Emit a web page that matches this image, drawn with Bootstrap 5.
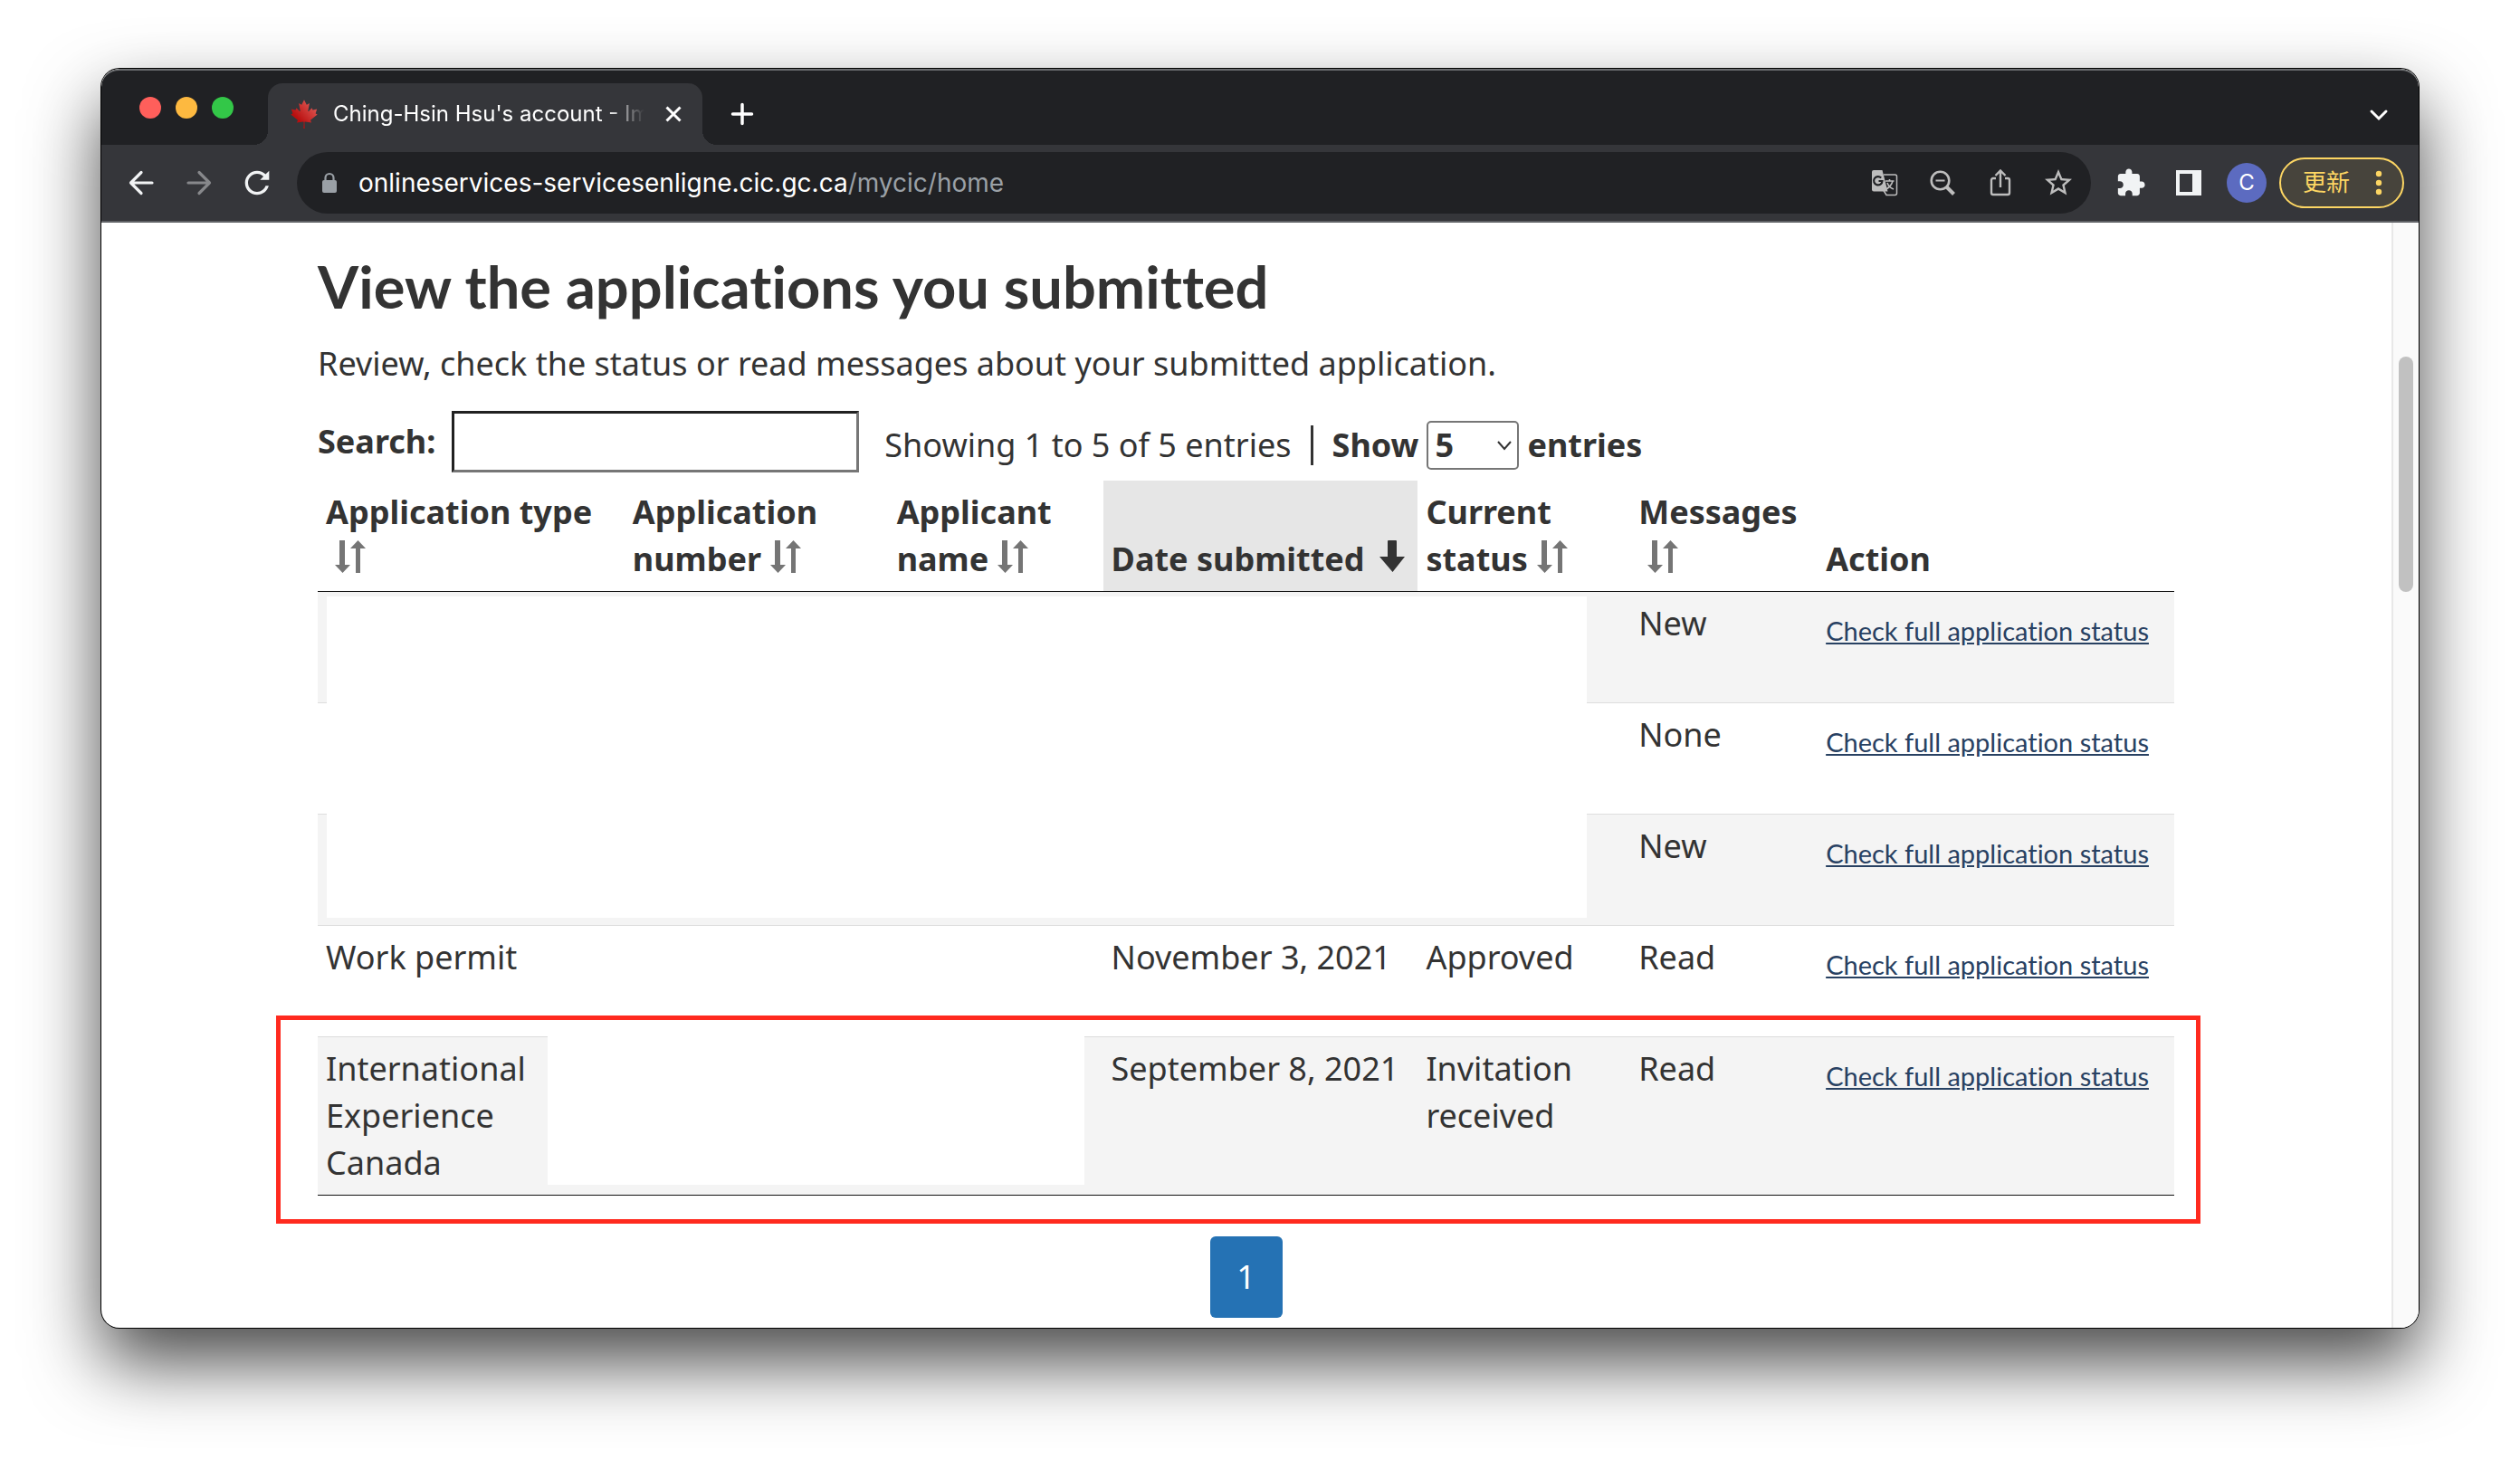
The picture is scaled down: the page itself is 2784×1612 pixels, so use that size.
<!DOCTYPE html>
<html lang="en">
<head>
<meta charset="utf-8">
<meta name="viewport" content="width=device-width, initial-scale=1">
<title>Ching-Hsin Hsu's account</title>
<link rel="stylesheet" href="https://cdn.jsdelivr.net/npm/bootstrap@5.3.0/dist/css/bootstrap.min.css">
<style>
  body { background: #fff; color: #333; font: 36px/52px "Noto Sans", sans-serif; }
  .desk { padding: 76px 112px 148px; }
  .browser-window { border-radius: 20px; background: #fff; box-shadow: 0 0 0 1px #000, 0 38px 80px rgba(0,0,0,.72); overflow: hidden; }
  .chrome-ui { font-family: Inter, "Noto Sans CJK TC", sans-serif; color: #fff; }
  .chrome-ui button { background: none; border: 0; padding: 0; color: inherit; display: flex; align-items: center; justify-content: center; }
  svg { display: block; flex: none; }

  /* tab strip */
  .tab-strip { height: 84px; background: #202124; border-top: 2px solid #6a6c6f; padding: 0 24px 0 42px; border-radius: 20px 20px 0 0; }
  .lights { gap: 16px; height: 82px; }
  .light { width: 24px; height: 24px; border-radius: 50%; }
  .chrome-tab { position: relative; width: 480px; height: 68px; margin-left: 38px; padding: 0 16px 0 24px; background: #35363a; border-radius: 16px 16px 0 0; }
  .chrome-tab::before, .chrome-tab::after { content: ""; position: absolute; bottom: 0; width: 16px; height: 16px; }
  .chrome-tab::before { right: 100%; background: radial-gradient(circle at 0 0, transparent 16px, #35363a 16px); }
  .chrome-tab::after { left: 100%; background: radial-gradient(circle at 100% 0, transparent 16px, #35363a 16px); }
  .strip-btn { height: 68px; }
  .tab-title { font-size: 24px; line-height: 32px; margin-left: 16px; overflow: hidden; white-space: nowrap; -webkit-mask-image: linear-gradient(90deg, #000 88%, transparent); mask-image: linear-gradient(90deg, #000 88%, transparent); }

  /* address bar row */
  .tool-row { background: #35363a; height: 86px; border-bottom: 2px solid #5f6165; padding: 0 16px 0 24px; }
  .nav-btn { width: 40px; height: 40px; margin-right: 24px; }
  .omnibox { height: 68px; border-radius: 34px; background: #202124; padding: 0 18px 0 26px; }
  .url-text { font-size: 28px; line-height: 40px; color: #9aa0a6; margin-left: 22px; }
  .url-text span { color: #fff; }
  .omni-icons { gap: 28px; color: #bdc1c6; }
  .omni-icons button { width: 36px; height: 40px; }
  .side-icons { gap: 28px; color: #f1f3f4; margin-left: 26px; }
  .side-icons button { width: 36px; }
  .chrome-ui .avatar-dot { width: 44px; height: 44px; border-radius: 50%; background: #5c6bc0; font-size: 24px; margin-left: 24px; }
  .chrome-ui .update-pill { height: 56px; width: 138px; margin-left: 14px; border: 2px solid #fdd663; border-radius: 28px; background: #47443c; color: #fdd663; font-size: 26px; gap: 28px; padding-left: 2px; }

  /* page */
  .page-body { padding: 34px 240px 11px 239px; }
  .page-body h1 { font: 700 65px/72px Lato, sans-serif; font-variant-ligatures: none; margin: 0 0 24px; }
  .page-body p { margin: 0 0 26px; }
  .scroll-track { flex: 0 0 30px; background: #fafafa; border-left: 2px solid #e8e8e8; padding: 148px 6px 0; }
  .scroll-thumb { height: 260px; border-radius: 8px; background: #c1c1c1; }
  .search-box { width: 450px; height: 68px; border: 3px inset #767676; padding: 2px 8px; margin-left: 18px; background: #fff; }
  .list-info { margin-left: 28px; padding-top: 8px; }
  .split-bar { width: 3px; height: 44px; background: #333; margin: 0 21px; }
  .len-label { gap: 9px; }
  .len-wrap { position: relative; }
  .len-select { appearance: none; width: 102px; height: 54px; border: 2px solid #767676; border-radius: 5px; background: #fff; font-weight: 700; color: #333; padding: 0 7px; line-height: 48px; display: block; }
  .len-wrap svg { position: absolute; right: 8px; top: 22px; }

  .table-area { position: relative; margin-top: 9px; }
  .apps-table { width: 100%; table-layout: fixed; border-collapse: separate; border-spacing: 0; }
  .apps-table th { padding: 9px; vertical-align: bottom; border-bottom: 1px solid #111; text-align: left; }
  .apps-table th svg { display: inline-block; vertical-align: -2px; margin-left: 10px; }
  .apps-table th.sorted { background: #e6e6e6; white-space: nowrap; }
  .apps-table td { padding: 9px; height: 123px; vertical-align: top; border-top: 1px solid #ddd; }
  .apps-table tbody tr:nth-child(odd) td { background: #f4f4f4; }
  .apps-table tbody tr:first-child td { border-top: 0; height: 122px; }
  .apps-table tbody tr:last-child td { border-bottom: 1px solid #111; }
  .c1 { width: 16.52%; } .c2 { width: 14.23%; } .c3 { width: 11.55%; } .c4 { width: 16.96%; }
  .c5 { width: 11.45%; } .c6 { width: 10.09%; } .c7 { width: 19.2%; }
  .status-link { display: block; padding-top: 8px; font-family: Lato, sans-serif; font-size: 29px; font-variant-ligatures: none; color: #284162; white-space: nowrap; }
  .status-link:hover { color: #0535d2; }
  /* blanked-out personal details and the marker frame lie over the table */
  .blank-out { position: absolute; background: #fff; }
  .blank-a { left: 10px; top: 128px; width: 1392px; height: 355px; }
  .blank-b { left: 254px; bottom: 12px; width: 593px; height: 164px; }
  .marker { position: absolute; left: -46px; right: -29px; bottom: -31px; height: 230px; border: 5px solid #ff2a1f; }
  .pager-row { padding-top: 45px; }
  .pager-btn { width: 80px; height: 90px; border-radius: 6px; background: #2572b4; color: #fff; text-decoration: none; }
</style>
<script src="https://cdn.jsdelivr.net/npm/bootstrap@5.3.0/dist/js/bootstrap.bundle.min.js" defer></script>
</head>
<body>
<svg width="0" height="0" class="position-absolute" aria-hidden="true">
  <symbol id="sort-both" viewBox="0 0 34 36"><path d="M5 0h6v27h6L8.500 36 0 27h5zM23 36V9h-6L25.500 0 34 9h-6v27z"/></symbol>
</svg>
<div class="desk">
<div class="browser-window">
  <header class="chrome-ui">
    <div class="tab-strip d-flex align-items-end">
      <div class="lights d-flex align-items-center">
        <span class="light" style="background:#ff5f5b"></span><span class="light" style="background:#fdb940"></span><span class="light" style="background:#33c748"></span>
      </div>
      <div class="chrome-tab d-flex align-items-center">
        <svg width="32" height="32" viewBox="-2030 -2030 4060 4060"><defs><linearGradient id="leaf" x1="1" y1="0" x2="0" y2="1"><stop offset=".2" stop-color="#d9504c"/><stop offset=".7" stop-color="#b90f0f"/></linearGradient></defs><path fill="url(#leaf)" d="m-90 2030 45-863a95 95 0 0 0-111-98l-859 151 116-320a65 65 0 0 0-20-73l-941-762 212-99a65 65 0 0 0 34-79l-186-572 542 115a65 65 0 0 0 73-38l105-247 423 454a65 65 0 0 0 111-57l-204-1052 327 189a65 65 0 0 0 91-27l332-652 332 652a65 65 0 0 0 91 27l327-189-204 1052a65 65 0 0 0 111 57l423-454 105 247a65 65 0 0 0 73 38l542-115-186 572a65 65 0 0 0 34 79l212 99-941 762a65 65 0 0 0-20 73l116 320-859-151a95 95 0 0 0-111 98l45 863z"/></svg>
        <div class="tab-title flex-grow-1">Ching-Hsin Hsu's account - Im</div>
        <button type="button" aria-label="Close tab" class="ms-3"><svg width="32" height="32" viewBox="0 0 32 32" stroke="#fff" stroke-width="3"><path d="m8.500 8.500 15 15m0-15-15 15"/></svg></button>
      </div>
      <button type="button" aria-label="New tab" class="strip-btn ms-4 ps-1"><svg width="32" height="32" viewBox="0 0 32 32" stroke="#fff" stroke-width="3.500" stroke-linecap="round"><path d="M16 5.500v21M5.500 16h21"/></svg></button>
      <button type="button" aria-label="Search tabs" class="strip-btn ms-auto"><svg width="40" height="32" viewBox="0 0 40 32" fill="none" stroke="#fff" stroke-width="3" stroke-linecap="round"><path d="m12 13 8 8 8-8"/></svg></button>
    </div>
    <div class="tool-row d-flex align-items-center">
      <button type="button" aria-label="Back" class="nav-btn"><svg width="40" height="40" viewBox="0 0 40 40" fill="none" stroke="#f1f3f4" stroke-width="3.200" stroke-linecap="round" stroke-linejoin="round"><path d="M32 20H8.500M20 8.500 8.500 20 20 31.500"/></svg></button>
      <button type="button" aria-label="Forward" class="nav-btn"><svg width="40" height="40" viewBox="0 0 40 40" fill="none" stroke="#87888b" stroke-width="3.200" stroke-linecap="round" stroke-linejoin="round"><path d="M8 20h23.500M20 8.500 31.500 20 20 31.500"/></svg></button>
      <button type="button" aria-label="Reload" class="nav-btn"><svg width="40" height="40" viewBox="0 0 24 24" fill="#f1f3f4"><path d="M17.650 6.350C16.200 4.900 14.210 4 12 4c-4.420 0-7.990 3.580-7.990 8s3.570 8 7.990 8c3.730 0 6.840-2.550 7.730-6h-2.080c-.820 2.330-3.040 4-5.650 4-3.310 0-6-2.690-6-6s2.690-6 6-6c1.660 0 3.140.690 4.220 1.780L14 10h6V4l-2.350 2.350z"/></svg></button>
      <div class="omnibox d-flex align-items-center flex-grow-1">
        <svg width="20" height="24" viewBox="0 0 20 24"><rect x="2" y="9" width="16" height="14" rx="2" fill="#9aa0a6"/><path d="M5.500 10V6.500a4.500 4.500 0 0 1 9 0V10" fill="none" stroke="#9aa0a6" stroke-width="2.200"/></svg>
        <div class="url-text flex-grow-1"><span>onlineservices-servicesenligne.cic.gc.ca</span>/mycic/home</div>
        <div class="omni-icons d-flex align-items-center">
          <button type="button" aria-label="Translate"><svg width="30" height="30" viewBox="0 0 30 30"><path d="M14 6h12.500a2 2 0 0 1 2 2v18.500a2 2 0 0 1-2 2H17l-3-5" fill="none" stroke="#bdbdbd" stroke-width="1.500"/><path d="M3 1h9.500l6 23.500H3a2 2 0 0 1-2-2V3a2 2 0 0 1 2-2z" fill="#bdbdbd"/><path d="M11.200 9.500A4.700 4.700 0 1 0 12.500 13H8.500" fill="none" stroke="#202124" stroke-width="2.200"/><path d="M16 13h9.500M20.500 11v2M24 13c-1 4-4 7-7 9M18 15c1 3 4 6 7 7" fill="none" stroke="#bdbdbd" stroke-width="1.600"/></svg></button>
          <button type="button" aria-label="Zoom"><svg width="30" height="30" viewBox="0 0 30 30" fill="none" stroke="#bdbdbd" stroke-width="2.600"><circle cx="12.500" cy="12.500" r="9.800"/><path d="m19.500 19.500 8 8" stroke-width="4"/><path d="M7.500 12.500h10" stroke-width="1.800"/></svg></button>
          <button type="button" aria-label="Share"><svg width="30" height="32" viewBox="0 0 30 32" fill="none" stroke="#bdbdbd" stroke-width="2.400"><path d="M10 11H7a2 2 0 0 0-2 2v14a2 2 0 0 0 2 2h16a2 2 0 0 0 2-2V13a2 2 0 0 0-2-2h-3M15 21V3M9.500 8 15 2.500 20.500 8"/></svg></button>
          <button type="button" aria-label="Bookmark"><svg width="36" height="36" viewBox="0 0 24 24" fill="#bdbdbd"><path d="M22 9.240l-7.190-.620L12 2 9.190 8.630 2 9.240l5.460 4.730L5.820 21 12 17.270 18.180 21l-1.630-7.030L22 9.240zM12 15.400l-3.760 2.270 1-4.280-3.320-2.880 4.380-.380L12 6.100l1.710 4.040 4.380.380-3.320 2.880 1 4.280L12 15.400z"/></svg></button>
        </div>
      </div>
      <div class="side-icons d-flex align-items-center">
        <button type="button" aria-label="Extensions"><svg width="34" height="34" viewBox="0 0 24 24" fill="#f1f3f4"><path d="M20.500 11H19V7c0-1.100-.9-2-2-2h-4V3.500C13 2.120 11.880 1 10.500 1S8 2.120 8 3.500V5H4c-1.100 0-1.990.9-1.990 2v3.800H3.500c1.490 0 2.700 1.210 2.700 2.700s-1.210 2.700-2.700 2.700H2V20c0 1.100.9 2 2 2h3.800v-1.500c0-1.490 1.210-2.700 2.700-2.700 1.490 0 2.700 1.210 2.700 2.700V22H17c1.100 0 2-.9 2-2v-4h1.500c1.380 0 2.500-1.120 2.500-2.500S21.880 11 20.500 11z"/></svg></button>
        <button type="button" aria-label="Side panel"><svg width="28" height="28" viewBox="0 0 28 28"><path fill="#f1f3f4" fill-rule="evenodd" d="M0 0h28v28H0zM4 4v20h14V4z"/></svg></button>
      </div>
      <button type="button" class="avatar-dot">C</button>
      <button type="button" class="update-pill">更新<svg width="8" height="28" viewBox="0 0 8 28" fill="#fdd663"><circle cx="4" cy="4" r="3.200"/><circle cx="4" cy="14" r="3.200"/><circle cx="4" cy="24" r="3.200"/></svg></button>
    </div>
  </header>

  <div class="d-flex">
    <main class="page-body flex-grow-1">
      <h1>View the applications you submitted</h1>
      <p>Review, check the status or read messages about your submitted application.</p>
      <div class="d-flex align-items-center">
        <label for="search" class="fw-bold">Search:</label>
        <input id="search" type="search" class="search-box">
        <div class="list-info d-flex align-items-center">
          <span>Showing 1 to 5 of 5 entries</span>
          <span class="split-bar"></span>
          <div class="len-label d-flex align-items-center fw-bold">
            <label for="len">Show</label>
            <div class="len-wrap">
              <select id="len" class="len-select"><option>5</option></select>
              <svg width="16" height="11" viewBox="0 0 16 11" fill="none" stroke="#333" stroke-width="2"><path d="m1 1 7 8 7-8"/></svg>
            </div>
            <span>entries</span>
          </div>
        </div>
      </div>

      <div class="table-area">
        <table class="apps-table">
          <colgroup><col class="c1"><col class="c2"><col class="c3"><col class="c4"><col class="c5"><col class="c6"><col class="c7"></colgroup>
          <thead>
            <tr>
              <th scope="col">Application type<svg width="34" height="36" fill="#757575"><use href="#sort-both"/></svg></th>
              <th scope="col">Application number<svg width="34" height="36" fill="#757575"><use href="#sort-both"/></svg></th>
              <th scope="col">Applicant name<svg width="34" height="36" fill="#757575"><use href="#sort-both"/></svg></th>
              <th scope="col" class="sorted">Date submitted<svg width="40" height="36" viewBox="0 0 40 36" fill="#333"><path d="M17 0h7a1 1 0 0 1 1 1v17h9L20.500 35 6 18h9V1a1 1 0 0 1 1-1z"/></svg></th>
              <th scope="col">Current status<svg width="34" height="36" fill="#757575"><use href="#sort-both"/></svg></th>
              <th scope="col">Messages<svg width="34" height="36" fill="#757575"><use href="#sort-both"/></svg></th>
              <th scope="col">Action</th>
            </tr>
          </thead>
          <tbody>
            <tr><td></td><td></td><td></td><td></td><td></td><td>New</td><td><a href="#" class="status-link">Check full application status</a></td></tr>
            <tr><td></td><td></td><td></td><td></td><td></td><td>None</td><td><a href="#" class="status-link">Check full application status</a></td></tr>
            <tr><td></td><td></td><td></td><td></td><td></td><td>New</td><td><a href="#" class="status-link">Check full application status</a></td></tr>
            <tr><td>Work permit</td><td></td><td></td><td>November 3, 2021</td><td>Approved</td><td>Read</td><td><a href="#" class="status-link">Check full application status</a></td></tr>
            <tr><td>International<br>Experience<br>Canada</td><td></td><td></td><td>September 8, 2021</td><td>Invitation received</td><td>Read</td><td><a href="#" class="status-link">Check full application status</a></td></tr>
          </tbody>
        </table>
        <div class="blank-out blank-a"></div>
        <div class="blank-out blank-b"></div>
        <div class="marker"></div>
      </div>

      <nav class="pager-row d-flex justify-content-center" aria-label="Pages">
        <a href="#" class="pager-btn d-flex align-items-center justify-content-center">1</a>
      </nav>
    </main>
    <div class="scroll-track"><div class="scroll-thumb"></div></div>
  </div>
</div>
</div>
</body>
</html>
